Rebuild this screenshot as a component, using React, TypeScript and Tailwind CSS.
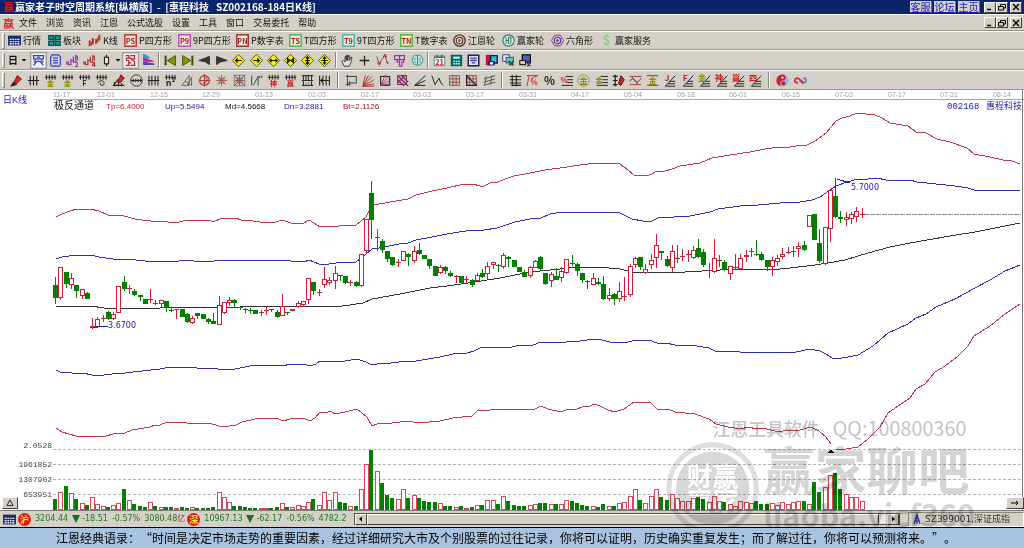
import type { ReactNode } from "react";

// ---------------------------------------------------------------- chart data

// [up, bodyTop, bodyBottom, high, low], in thirds of a chart unit below y=170
type Candle = [number, number, number, number, number];

const CANDLES: Candle[] = [
  [0, 344, 384, 321, 401], [1, 292, 383, 292, 390], [0, 306, 342, 306, 355], [1, 325, 346, 308, 357],
  [0, 346, 362, 346, 385], [1, 358, 377, 358, 386], [0, 369, 386, 365, 386], [1, 468, 475, 443, 478],
  [1, 447, 472, 442, 475], [1, 443, 447, 435, 457], [0, 425, 447, 424, 450], [1, 432, 446, 427, 451],
  [1, 348, 430, 348, 430], [0, 337, 358, 317, 362], [1, 354, 357, 344, 371], [0, 363, 375, 357, 378],
  [0, 376, 380, 375, 394], [0, 387, 401, 387, 401], [1, 387, 389, 357, 398], [0, 399, 401, 391, 404],
  [1, 391, 401, 391, 414], [0, 394, 415, 393, 425], [0, 420, 423, 411, 427], [1, 418, 421, 418, 446],
  [0, 417, 440, 417, 440], [0, 433, 456, 430, 459], [1, 444, 458, 438, 462], [0, 430, 438, 430, 446],
  [0, 433, 446, 433, 446], [0, 446, 455, 444, 462], [0, 453, 461, 430, 462], [1, 406, 466, 378, 466],
  [1, 397, 428, 397, 432], [1, 391, 400, 382, 408], [0, 391, 399, 387, 412], [0, 411, 414, 407, 419],
  [0, 417, 419, 413, 428], [0, 419, 421, 414, 432], [0, 420, 431, 420, 431], [1, 426, 429, 420, 438],
  [1, 420, 422, 408, 435], [0, 418, 420, 417, 427], [0, 425, 440, 421, 445], [1, 408, 437, 372, 437],
  [0, 426, 428, 425, 435], [1, 418, 422, 417, 424], [1, 400, 412, 392, 415], [1, 394, 404, 394, 412],
  [1, 325, 391, 325, 402], [0, 337, 363, 337, 375], [1, 366, 369, 357, 377], [1, 328, 345, 292, 355],
  [1, 331, 340, 320, 346], [1, 308, 334, 287, 358], [0, 315, 317, 315, 332], [0, 319, 338, 319, 343],
  [1, 336, 338, 330, 347], [0, 336, 347, 334, 352], [1, 253, 347, 253, 350], [1, 148, 244, 148, 248],
  [0, 68, 150, 34, 208], [1, 201, 203, 178, 243], [0, 213, 241, 208, 248], [0, 243, 266, 243, 275],
  [0, 262, 284, 262, 288], [1, 276, 278, 268, 290], [1, 244, 274, 244, 274], [0, 252, 261, 250, 287],
  [1, 244, 272, 228, 279], [0, 240, 252, 220, 254], [0, 256, 266, 256, 266], [0, 268, 288, 267, 298],
  [0, 287, 318, 287, 318], [1, 292, 310, 284, 313], [0, 291, 304, 288, 312], [0, 310, 318, 304, 320],
  [1, 318, 321, 314, 338], [0, 318, 338, 318, 338], [1, 327, 330, 318, 342], [0, 330, 345, 327, 350],
  [1, 316, 334, 308, 336], [0, 310, 320, 297, 323], [1, 288, 313, 275, 327], [1, 277, 286, 275, 298],
  [0, 285, 288, 283, 305], [1, 256, 290, 250, 296], [0, 260, 267, 259, 291], [0, 270, 290, 270, 290],
  [0, 290, 305, 290, 306], [0, 305, 320, 299, 321], [1, 290, 317, 287, 324], [1, 274, 294, 269, 295],
  [0, 261, 297, 258, 300], [0, 309, 341, 309, 346], [1, 313, 334, 306, 350], [0, 319, 329, 295, 330],
  [1, 304, 325, 292, 336], [1, 268, 308, 266, 313], [0, 278, 281, 256, 287], [0, 283, 302, 280, 318],
  [0, 308, 331, 308, 340], [0, 333, 335, 330, 357], [1, 325, 344, 308, 346], [0, 337, 341, 325, 345],
  [0, 342, 388, 318, 390], [1, 374, 387, 353, 393], [0, 373, 387, 368, 405], [1, 363, 387, 335, 396],
  [1, 377, 379, 321, 392], [1, 287, 376, 283, 381], [1, 263, 286, 261, 293], [0, 262, 291, 262, 300],
  [1, 296, 310, 281, 311], [1, 271, 284, 252, 296], [1, 226, 265, 191, 294], [0, 244, 250, 243, 269],
  [0, 267, 287, 257, 291], [1, 242, 293, 224, 307], [1, 264, 266, 224, 278], [1, 259, 262, 237, 272],
  [1, 251, 254, 240, 277], [1, 240, 263, 228, 266], [0, 235, 261, 208, 265], [0, 247, 284, 236, 291],
  [1, 300, 303, 280, 325], [1, 265, 305, 206, 309], [1, 271, 274, 254, 292], [0, 276, 300, 270, 304],
  [1, 289, 311, 287, 329], [1, 291, 293, 251, 297], [1, 265, 298, 252, 300], [1, 255, 262, 240, 275],
  [1, 242, 244, 234, 260], [0, 253, 255, 210, 258], [0, 253, 269, 246, 272], [0, 271, 291, 271, 303],
  [1, 270, 290, 261, 318], [1, 263, 277, 255, 288], [1, 251, 260, 235, 266], [1, 246, 248, 232, 252],
  [1, 244, 247, 228, 262], [1, 228, 238, 217, 260], [0, 226, 240, 214, 244], [1, 136, 170, 136, 170],
  [0, 131, 209, 131, 209], [0, 220, 273, 176, 280], [1, 172, 283, 172, 286], [1, 60, 178, 60, 217],
  [0, 77, 141, 25, 145], [0, 141, 146, 122, 160], [1, 140, 150, 125, 169], [1, 131, 148, 126, 163],
  [1, 123, 142, 111, 155], [1, 133, 135, 114, 143],
];

const VOLUMES = [
  33, 54, 71, 50, 33, 21, 16, 40, 18, 13, 10, 15, 21, 64, 30, 19, 13, 10, 24, 13,
  10, 10, 10, 6, 10, 7, 8, 5, 5, 5, 10, 54, 39, 24, 12, 12, 9, 7, 7, 5,
  7, 6, 9, 21, 10, 8, 16, 12, 24, 33, 16, 54, 30, 54, 24, 22, 12, 12, 62, 138,
  179, 116, 80, 45, 36, 32, 62, 36, 45, 36, 28, 25, 25, 21, 12, 12, 8, 12, 7, 9,
  16, 15, 30, 30, 18, 42, 27, 16, 12, 12, 16, 18, 21, 21, 18, 18, 18, 30, 27, 21,
  16, 12, 11, 9, 18, 12, 12, 21, 24, 42, 62, 30, 21, 42, 62, 39, 30, 48, 36, 28,
  28, 36, 39, 33, 23, 42, 26, 24, 18, 12, 27, 24, 21, 27, 19, 19, 21, 15, 24, 17,
  24, 26, 26, 18, 85, 54, 69, 105, 112, 64, 48, 39, 39, 26,
];

const TOP =
  "56,217 62,214 70,211 77,209 90,209 99,211 108,215 114,216 118,215 124,216 135,219 142,220 151,221 156,222 161,221 168,222 179,222 187,220 206,220 211,221 215,221 220,219 226,218 231,219 236,218 241,220 253,221 260,222 276,222 282,220 291,223 304,223 309,220 314,223 320,227 324,226 330,227 339,226 356,225 366,217 372,205 379,204 396,201 408,199 416,195 432,191 447,188 464,184 473,184 480,186 484,186 490,183 498,182 505,179 514,176 530,173 545,170 560,168 580,165 596,163 612,163 620,164 628,170 634,175 646,176 652,174 657,171 665,171 672,169 680,166 700,163 712,158 730,155 750,152 765,149 780,147 790,147 796,146 807,145 815,141 826,133 836,121 842,118 850,116 857,113 875,115 882,118 890,123 908,126 916,132 926,133 937,139 950,142 967,148 974,154 990,157 1003,160 1012,161 1020,164";
const UP =
  "56,259 62,257 69,256 75,255 91,255 99,257 113,259 136,260 153,262 179,261 187,260 194,261 214,261 222,260 242,260 274,261 282,260 291,261 304,262 309,260 314,262 319,264 329,264 336,263 356,262 366,254 372,249 379,248 399,244 408,243 416,240 432,237 447,234 472,230 484,230 497,228 515,222 530,219 541,218 550,214 562,212 572,213 578,212 590,213 612,212 620,213 632,219 643,221 652,221 658,218 690,216 710,212 718,209 740,206 758,205 780,203 800,202 812,200 820,197 830,190 836,186 847,182 858,179 868,179 877,178 886,180 910,180 917,182 936,184 955,186 968,188 974,190 1000,190 1020,191";
const MID =
  "56,307 70,306 91,306 104,308 160,308 180,307 240,307 250,306 342,306 350,305 363,303 372,299 400,294 430,288 447,286 475,282 500,278 520,274 540,271 560,269 578,267 598,267 620,269 632,272 685,272 720,270 745,269 780,269 790,268 815,265 828,263 845,260 868,253 890,247 910,243 950,236 975,232 1000,227 1020,223";
const DOWN =
  "56,370 60,372 72,373 77,374 83,373 92,375 104,375 112,374 125,373 142,371 160,369 170,367 180,367 197,368 213,368 223,370 235,369 250,366 260,365 278,365 283,366 290,364 304,364 310,366 316,364 320,361 326,362 331,361 336,362 345,361 357,359 366,362 372,365 382,363 391,363 408,361 416,361 440,357 453,354 467,353 474,351 480,348 512,347 520,345 533,345 541,342 560,343 572,341 580,341 594,339 602,340 614,343 628,342 636,340 649,340 657,343 666,343 675,345 697,346 709,348 715,351 740,352 768,352 777,353 796,352 810,349 820,351 826,354 832,358 837,359 848,357 858,355 873,346 888,333 908,324 916,318 926,314 936,307 955,299 975,288 990,280 1005,271 1020,265";
const BOTTOM =
  "56,428 62,432 76,436 91,436 98,437 106,436 113,434 125,433 132,430 150,427 155,425 160,425 167,422 184,422 187,423 212,424 223,427 236,425 242,422 255,419 277,418 283,421 290,419 303,418 310,421 315,418 320,412 325,413 331,411 335,414 345,412 357,409 367,417 372,426 377,424 392,423 408,421 418,423 440,421 453,418 472,416 478,410 490,410 500,409 506,410 528,409 533,410 541,406 548,409 561,412 568,409 577,409 582,407 590,406 594,404 600,406 608,410 615,412 624,409 634,402 650,402 657,409 668,409 675,412 695,414 709,419 716,424 728,427 742,429 747,427 758,429 763,428 775,431 783,431 800,430 811,427 819,431 826,437 831,444";
const BOTTOM_TAIL =
  "836,450 846,449 858,447 868,439 880,427 888,413 898,406 910,398 916,389 925,384 935,372 945,366 957,357 968,346 974,336 990,326 1005,314 1020,304";

const DATES = [
  "12-01", "12-15", "12-29", "01-13", "02-03", "02-17", "03-03", "03-17", "03-31",
  "04-17", "05-04", "05-18", "06-01", "06-15", "07-03", "07-17", "07-31", "08-14",
];

const SCALE = [
  { y: 449, label: "2.0528" },
  { y: 464, label: "1961852" },
  { y: 479, label: "1307902" },
  { y: 494, label: "653951" },
];

const RED = "#cc1f36";
const GREEN = "#008000";
const BLUE = "#1a1aa8";

// --------------------------------------------------------------------- icons

function P({ d, c = "#222", f = "none", w = 1.2 }: { d: string; c?: string; f?: string; w?: number }) {
  return <path d={d} stroke={c} fill={f} strokeWidth={w} />;
}

function T({ x = 8, y = 13, c = "#222", s = 10, children }: { x?: number; y?: number; c?: string; s?: number; children: string }) {
  return (
    <text x={x} y={y} fill={c} fontSize={s} fontWeight="bold" textAnchor="middle">
      {children}
    </text>
  );
}

function Svg({ children }: { children: ReactNode }) {
  return (
    <svg viewBox="0 0 16 16" className="h-[13px] w-[13px] shrink-0 overflow-visible" aria-hidden="true">
      {children}
    </svg>
  );
}

const tag = (text: string, c: string) => (
  <>
    <rect x="1" y="1" width="14" height="14" fill="#f4ecd8" stroke={c} strokeWidth="1.6" />
    <T y={12} s={9} c="#b01818">{text}</T>
  </>
);

const table = (
  <>
    <rect x="0" y="2" width="16" height="12" fill="#1c2c6c" />
    <P d="M2 6.500h12M2 9.500h12M2 12h12" c="#e8ecff" w={1.6} />
    <P d="M5 5v9M8 5v9M11 5v9" c="#1c2c6c" w={1} />
  </>
);

const comb = "M1 4h14M3 1v6M6.500 1v6M10 1v6M13.500 1v6";
const combWith = (text: string, c: string) => (
  <>
    <P d={comb} />
    <T y={15} s={9} c={c}>{text}</T>
  </>
);

const slopes = (text: string, c: string) => (
  <>
    <P d="M3 15h12M6 12h9M8 9h7M3 15 15 2" />
    <T x={5} y={9} s={10} c={c}>{text}</T>
  </>
);

const levels = (text: string, c: string) => (
  <>
    <P d="M7 3h9M9 7h7M9 10.500h7M2 14h14" />
    <T x={5} y={11} s={9} c={c}>{text}</T>
  </>
);

const diamond = (d: string) => (
  <>
    <P d="M8 .5 15.500 8 8 15.500 .5 8Z" f="#f4ee10" c="#3c3c00" w={1} />
    <P d={d} w={1.5} c="#111" />
  </>
);

const bars = (c: string, c2: string, n: string) => (
  <>
    <P d="M1 13v-3h2v3h3V6M6 8h3V3M9 4v6h3V1M12 3h2v5" c={c} w={1.5} />
    <T x={13} y={16} s={8} c={c2}>{n}</T>
  </>
);

const pressed = <rect x="-1.500" y="-1.500" width="19" height="19" fill="#f2f1ee" stroke="#8a867e" strokeWidth="1.200" />;

const grid = "M2 2h12v12H2ZM6 2v12M10 2v12M2 6h12M2 10h12";

const QUICK: { icon: ReactNode; label: string; cls: string }[] = [
  { icon: table, label: "行情", cls: "w-10" },
  {
    icon: <><P d="M1 2h6v5H1ZM9 2h6v5H9ZM1 9h6v5H1ZM9 9h6v5H9Z" c="#054a4a" f="#18a0a0" w={1.6} /><P d="M5 5l6 6" w={2} c="#073" /></>,
    label: "板块",
    cls: "w-10",
  },
  {
    icon: <><P d="M2 8v7M6 5v8M10 6v6M14 1v7" c="#d22" w={2.4} /><P d="M4 9v5M12 4v6" c="#182" w={1.6} /></>,
    label: "K线",
    cls: "w-9",
  },
  { icon: tag("PS", "#b02020"), label: "P四方形", cls: "w-[54px]" },
  { icon: tag("P9", "#c030c0"), label: "9P四方形", cls: "w-[58px]" },
  { icon: tag("PN", "#802020"), label: "P数字表", cls: "w-[53px]" },
  { icon: tag("TS", "#30b050"), label: "T四方形", cls: "w-[53px]" },
  { icon: tag("T9", "#30b0a8"), label: "9T四方形", cls: "w-[58px]" },
  { icon: tag("TN", "#40b020"), label: "T数字表", cls: "w-[53px]" },
  {
    icon: <><circle cx="8" cy="8" r="7" fill="#d8d0c0" stroke="#5a3030" strokeWidth="1.6" /><circle cx="8" cy="8" r="4" fill="none" stroke="#7a2020" strokeWidth="1.400" /><circle cx="8" cy="8" r="1.500" fill="#184" /></>,
    label: "江恩轮",
    cls: "w-[49px]",
  },
  {
    icon: <><circle cx="8" cy="8" r="7" fill="#d8e8e0" stroke="#3a7a6a" strokeWidth="1.400" /><P d="M5 4v8M8 4v8M5 8h3M11 4v6q0 2-2 2M8 4h3" c="#287868" /></>,
    label: "赢家轮",
    cls: "w-[49px]",
  },
  {
    icon: <><P d="M4.500 1.500h7L15.500 8l-4 6.500h-7L.5 8Z" c="#b02860" /><circle cx="8" cy="8" r="4" fill="#c8c8f8" stroke="#2838c0" strokeWidth="1.400" /><circle cx="8" cy="8" r="1.600" fill="#b02020" /></>,
    label: "六角形",
    cls: "w-[49px]",
  },
  { icon: <T y={14} s={16} c="#84cf84">$</T>, label: "赢家服务", cls: "w-[54px]" },
];

const NAV_A: ReactNode[] = [
  <>{pressed}<P d="M1 2h14M2 2v4h12V2M4 6v3M12 6v3M2 14l4-5h4l4 5M5 11l-3-2M11 11l3-2M6 4h4" c="#2a3ad0" w={1.400} /></>,
  <><P d="M4 1h8l2 3v9q0 2-2 2H4q-2 0-2-2V4ZM5 5h6M5 8h6M5 11h6" c="#3040c8" w={1.400} /></>,
  bars("#8c3c9c", "#7030a0", "2"),
  bars("#b03838", "#902020", "4"),
  <><P d="M8 1v3M8 12v3" w={1.500} /><rect x="5.500" y="4" width="5" height="8" fill="#e8e8e0" stroke="#222" strokeWidth="1.400" /></>,
];

const NAV_B: ReactNode[] = [
  <>{pressed}<P d="M2 2h4v3H3v3h3v6H2M8 2h5v4H9l4 4v4H8M6 5h3M5 11h4" c="#b82030" w={1.500} /></>,
  <><P d="M2 0 9 4 2 8Z" f="#30a0b0" c="#30a0b0" /><P d="M2 5 14 9H2Z" f="#c020c0" c="#c020c0" /><P d="M2 10 15 12.500 2 13Z" f="#d03030" c="#3040a0" /></>,
];

const NAV_C: ReactNode[] = [
  <><P d="M2 2v12" w={2.400} c="#3c4a00" /><P d="M14 2v12L4 8Z" f="#8a9400" c="#4a5200" /></>,
  <><P d="M14 2v12" w={2.400} c="#3c4a00" /><P d="M2 2v12L12 8Z" f="#8a9400" c="#4a5200" /></>,
  <P d="M14 3v10L9 9.500 1 8Z" f="#333" c="#333" />,
  <P d="M2 3v10l5-3.500L15 8Z" f="#333" c="#333" />,
  diamond("M12 8H4.500M7 5.500 4.500 8 7 10.500"),
  diamond("M4 8h7.500M9 5.500 11.500 8 9 10.500"),
  diamond("M3.500 8h9M5.500 6 3.500 8l2 2M10.500 6l2 2-2 2"),
  diamond("M4.500 5.500v5L7 8ZM11.500 5.500v5L9 8ZM6 8h4"),
  diamond("M8 3.500v9M6 5.500 8 3.500l2 2M6 10.500l2 2 2-2M5 8h6"),
  diamond("M8 3v10M4 8h8M6 5h4M6 11h4"),
];

const NAV_D: ReactNode[] = [
  <><P d="M4 15 1 9l2-1 2 2V3h1.500v5V1.500H8V8l1-6h1.500l-.5 6 2-4h1.500L12 11l-2 4Z" f="#e8e4dc" w={1} /></>,
  <P d="M8 2v12M2 8h12" w={1.600} />,
  <><P d="M1 3l3 9 3-5 4-5 3 9" c="#666" /><P d="M2 10l2 3 2-3M9 4l2-3 2 3M13 9l2 3" c="#d03040" w={1.800} /></>,
  <><P d="M2 2h12v5H2ZM5 7v3h3v5h3v-5h2V7M8 2v8" c="#a030a8" w={1.500} /></>,
  <><P d="M8 2q-3-2-5 1-3 3-1 6 0 4 6 5V2q3-2 5 1 3 3 1 6 0 4-6 5M4 6h2M10 6h2M4 10h2M10 10h2" c="#2a9a8e" f="#b8e0d8" /></>,
];

const NAV_E: ReactNode[] = [
  <><rect x="1.500" y="2.500" width="13" height="12" fill="#f4f4f0" stroke="#2a8a90" /><P d="M2 4h12M5 1v3M11 1v3" c="#3a6a70" w={1.600} /><T s={9} c="#c22">21</T></>,
  <><rect x="1.500" y="1.500" width="13" height="13" fill="#0c6a70" stroke="#043" /><P d="M4 4.500h8" c="#9ff" w={2.600} /><P d="M4 9h2M7 9h2M10 9h2M4 12h2M7 12h2M10 12h2" c="#cff" w={1.600} /></>,
  <><rect x="1.500" y="1.500" width="13" height="13" fill="#dde0f4" stroke="#1c1c50" strokeWidth="1.800" /><P d="M4 5h8M4 8h8M6 11h4" c="#3a40a0" w={1.600} /></>,
  <><rect x="1" y="1" width="7" height="13" fill="#c01830" /><P d="M7 2h8v9H7Z" f="#38b8c8" c="#10207a" w={1.800} /><rect x="4" y="9" width="8" height="5" fill="#18186c" /><rect x="6" y="10" width="4" height="3" fill="#e8e8f0" /></>,
  <><rect x="1" y="1" width="8" height="8" fill="#eef" stroke="#226" /><rect x="5" y="4" width="9" height="7" fill="#6cc0d0" stroke="#153a6a" /><P d="M8 9l6 5M9 14l5-5" c="#163" w={2.400} /></>,
  <><rect x="4" y="1" width="10" height="9" fill="#5060c0" stroke="#111" strokeWidth="1.600" /><P d="M1 8h7v5H1ZM10 11l4 4M14 11l-4 4" c="#222" f="#d8d8a0" w={1.400} /></>,
];

const DRAW_A: ReactNode[] = [
  <><P d="M4 12 9 2l5 4-7 7Z" f="#d82828" c="#701010" /><P d="M1 15l3-5 4 3Z" f="#333" /></>,
  <P d="M1 8h14M4 2v12M8 2v12M12 2v12" w={1.400} />,
  combWith("金", "#8a8a00"),
  combWith("金", "#8a8a00"),
  combWith("F", "#333"),
  <><P d={comb} /><P d="M3 11q5-5 8-1 1 4-3 4-3-1-1-3" /></>,
  <><P d="M7 10l4-9 4 4-5 6Z" f="#d82828" c="#701010" /><P d="M1 14h14M3 10v5M8 11v4M12 11v4M2 14l6-8" w={1.300} /></>,
  <><circle cx="8" cy="8" r="7" fill="none" stroke="#333" strokeWidth="1.200" /><P d="M1 8h14M4 6v4M7 6v4M10 6v4M13 6v4" /></>,
  <P d="M1 8h14M2.500 2v12M6 2v12M10 2v12M13.500 2v12" w={1.300} />,
  <><P d={comb} /><T y={15} s={11}>n²</T></>,
  <P d="M1 14 10 2v12ZM5 9l8 5V4M8 14l5-10" c="#555" w={1} />,
  <><circle cx="8" cy="8" r="6" fill="none" stroke="#a03030" strokeWidth="1.300" /><P d="M8 0v15M1 8h14M8 5q4-1 3 3t-5 3" c="#b83030" /></>,
  <P d="M8 1v14M1 8h14M3 3l10 10M13 3 3 13M5 5h6v6H5Z" c="#a84848" w={1} />,
  <><rect x="1.500" y="1.500" width="13" height="13" fill="none" stroke="#666" /><P d="M2 2l12 12M14 2 2 14M8 2v12M2 8h12M5 5h6v6H5Z" c="#844" w={1} /></>,
  <P d="M2 2v12M4 14 10 3v11M12 2v3M14.500 2v3" c="#444" />,
  combWith("神", "#d01818"),
  combWith("赢", "#d01818"),
  <><P d="M1 2h14M3 2v12M6 2v6M9 2v6M13 2v12M1 8h14M1 14h14M6 11h1M9 11h1" c="#333" w={1.300} /></>,
  <P d="M2 2v12M6 2v12M10 2v12M14 2v12M2 8h12M4 6l2 2-2 2" w={1.300} />,
];

const DRAW_B: ReactNode[] = [
  <P d="M3 1v14M1 3h13M5 3h9v8H3M1 13h5M6 9v6" c="#444" />,
  <P d="M1 15 4 2M1 15 8 2M1 15 12 3M1 15 15 7M1 15l14-3M1 15h14" c="#b03030" />,
  <><rect x="2" y="3" width="11" height="11" fill="none" stroke="#222" strokeWidth="1.300" /><P d="M2 14 8 1M2 14 12 3M2 14l13-7M2 14l13-2" c="#a04080" /></>,
  <><rect x="2" y="2" width="11" height="11" fill="#d8a0a8" stroke="#602030" /><P d="M2 2l13 13M2 7l8 8M7 2l8 8M2 11l9-9" c="#703060" w={1.400} /></>,
  <P d="M1 14 14 2M1 14l13-6M1 14h13" />,
  <P d="M1 2l4 11 5-8 2 6 3 3" />,
  <P d={grid} c="#803838" w={1} />,
  <><P d={grid} c="#803838" w={1} /><P d="M2 1v13h13M2 2l12 12" w={1.500} /></>,
  <P d="M1 6l14-4M1 10l14-4M1 14l14-4M4 3l-2 11M11 2 9 13" c="#555" />,
];

const DRAW_C: ReactNode[] = [
  <P d="M4 1v14M9 1v14M1 3h14M1 7h14M1 11h14M3 14h12" w={1.300} />,
  <><P d="M1 2h14M4 2l-3 13M6 6l8-4" c="#c03030" /><T x={10} y={14} s={9} c="#d02020">%</T></>,
  <T y={14} s={14}>%</T>,
  levels("%", "#d02020"),
  <><circle cx="8" cy="8" r="7" fill="none" stroke="#9a9a20" strokeWidth="1.200" /><T y={12} s={10} c="#8a8a00">金</T></>,
  levels("金", "#8a8a00"),
  <><P d="M1 3h6M4 1v14M1 8h6M1 13h6" w={1.500} /><P d="M8 12 11 2l4 5-4 7Z" f="#c82828" c="#401010" /></>,
  <><P d="M1 3h14M1 13h14" c="#c03030" /><P d="M1 9q3-6 6-1t8-3M4 4l7 9" c="#444" /></>,
  <><P d="M1 2h14M1 14h14" c="#d04040" w={1.600} /><T y={12} s={10} c="#8a8a00">金</T></>,
  slopes("J", "#c02020"),
  slopes("F", "#c02020"),
  slopes("金", "#8a8a00"),
  slopes("神", "#d01818"),
  slopes("赢", "#d01818"),
  slopes("四", "#d01818"),
];

const DRAW_D: ReactNode[] = [
  <><circle cx="8" cy="8" r="7.500" fill="#88b8ec" /><path d="M8 .5a7.500 7.500 0 0 0 0 15 3.800 3.800 0 0 1 0-7.500 3.700 3.700 0 0 0 0-7.500Z" fill="#d81828" /><circle cx="9" cy="11.500" r="2.600" fill="#d81828" /><circle cx="8" cy="4.500" r="1.400" fill="#fff" /></>,
  <><P d="M11 6q3-2 4 1 0 4-4 4-2 0-4-3" c="#5a98c8" w={2.400} /><P d="M5 11q-4 0-4-3 1-4 5-2l6 5" c="#d83040" w={2.400} /></>,
];

// ------------------------------------------------------------------- toolbar

function Tools({ icons, name, cls }: { icons: ReactNode[]; name: string; cls: string }) {
  return (
    <div role="group" aria-label={name} className={`flex shrink-0 items-center justify-between ${cls}`}>
      {icons.map((icon, i) => (
        <button key={i} aria-label={`${name} ${i + 1}`} className="flex h-4 w-4 items-center justify-center">
          <Svg>{icon}</Svg>
        </button>
      ))}
    </div>
  );
}

function Divider({ tight = false }: { tight?: boolean }) {
  return <span className={`h-4 w-0.5 shrink-0 border-r border-white bg-[#8a867e] ${tight ? "mx-0.5" : "mx-1"}`} />;
}

function Grip() {
  return <span className="mr-[3px] h-4 w-[3px] shrink-0 border border-t-white border-r-[#8a867e] border-b-[#8a867e] border-l-white" />;
}

function Caret() {
  return (
    <svg viewBox="0 0 8 8" className="h-2 w-2 shrink-0" aria-hidden="true">
      <path d="M1.500 3h5L4 5.500Z" />
    </svg>
  );
}

const ROW = "flex items-center border-t border-b border-t-white border-b-[#9a968e] pl-0.5";
const RAISED = "border border-t-white border-r-[#404040] border-b-[#404040] border-l-white bg-[#d4d0c8]";

function WindowButtons() {
  const cls = `flex h-[11px] w-3 items-center justify-center ${RAISED}`;
  return (
    <div className="flex">
      <button aria-label="最小化" className={cls}>
        <svg viewBox="0 0 8 8" className="h-2 w-2"><path d="M1 6.500h4" stroke="#000" strokeWidth="1.500" /></svg>
      </button>
      <button aria-label="还原" className={cls}>
        <svg viewBox="0 0 8 8" className="h-2 w-2">
          <path d="M2.500 1.500h5v3.500h-2M2.500 1.500v1.500M.5 3.500h5V7h-5Z" fill="none" stroke="#000" />
        </svg>
      </button>
      <button aria-label="关闭" className={`ml-0.5 ${cls}`}>
        <svg viewBox="0 0 8 8" className="h-2 w-2"><path d="M1 1l6 6M7 1 1 7" stroke="#000" strokeWidth="1.400" /></svg>
      </button>
    </div>
  );
}

const MENU = ["文件", "浏览", "资讯", "江恩", "公式选股", "设置", "工具", "窗口", "交易委托", "帮助"];

// --------------------------------------------------------------------- chart

function Line({ points, color }: { points: string; color: string }) {
  return <polyline points={points} fill="none" stroke={color} strokeWidth="1" />;
}

function CandleMark({ candle, x }: { candle: Candle; x: number }) {
  const [up, ...rest] = candle;
  const [top, bottom, high, low] = rest.map((v) => Math.round(170 + v / 3));
  const color = up ? RED : GREEN;
  const height = Math.max(bottom - top, 1);
  return (
    <g fill={color}>
      <rect x={x} y={high} width="1" height={Math.max(low - high, 1)} />
      <rect x={x - 2} y={top} width="5" height={height} />
      {up === 1 && height > 2 && <rect x={x - 1} y={top + 1} width="3" height={height - 2} fill="#fff" />}
    </g>
  );
}

function VolumeBar({ value, up, x }: { value: number; up: boolean; x: number }) {
  const h = Math.round(value / 3);
  return (
    <g>
      <rect x={x - 2} y={510 - h} width={up ? 5 : 4} height={h} fill={up ? "#d24a5a" : GREEN} />
      {up && h > 2 && <rect x={x - 1} y={511 - h} width="3" height={h - 2} fill="#fff" />}
    </g>
  );
}

function Chart() {
  const colX = (i: number) => Math.round(55.2 + i * 5.27);
  return (
    <svg viewBox="0 90 1024 421" className="block w-full bg-white" role="img" aria-label="日K线">
      <g fontFamily="'Liberation Sans', sans-serif" fontSize="7" fill="#a0a0a0">
        <text x="53" y="97">11-17</text>
        {DATES.map((d, i) => (
          <text key={d} x={97 + Math.round(i * 52.7)} y="97">{d}</text>
        ))}
      </g>
      <path d="M53 99.500h971" stroke="#a8a8a8" />

      <g shapeRendering="crispEdges">
        {SCALE.map((s) => (
          <path key={s.y} d={`M53 ${s.y}.5H1022`} stroke="#b4b4b4" strokeDasharray="3 2" />
        ))}
        <path d="M864 214.500H1021" stroke="#8c8c8c" strokeDasharray="5 1" />
        <Line points={TOP} color="#c4384a" />
        <Line points={UP} color="#3030b4" />
        <Line points={MID} color="#333" />
        <Line points={DOWN} color="#3030b4" />
        <Line points={BOTTOM} color="#c4384a" />
        <Line points={BOTTOM_TAIL} color="#c4384a" />
        {CANDLES.map((c, i) => (
          <CandleMark key={i} candle={c} x={colX(i)} />
        ))}
        {VOLUMES.map((v, i) => (
          <VolumeBar key={i} value={v} up={CANDLES[i][0] === 1} x={colX(i)} />
        ))}
        <path d="M93 328 102 326h6M837 179l13 4" fill="none" stroke={BLUE} />
        <path d="M827 453h7l-3-3Z" fill="#000" />
        <path d="M0 510.500h1024" stroke="#7c7c7c" />
        <path d="M1022.500 90v421" stroke="#7c7c7c" />
      </g>

      <g fontFamily="'Liberation Mono', monospace" fontSize="8" fill="#444" textAnchor="end">
        {SCALE.map((s, i) => (
          <text key={s.y} x="52" y={i === 0 ? s.y - 1 : s.y + 3}>{s.label}</text>
        ))}
      </g>
      <g fontFamily="'DejaVu Sans', sans-serif" fontSize="8" fill={BLUE}>
        <text x="108" y="328">3.6700</text>
        <text x="851" y="190">5.7000</text>
      </g>

      <g fontFamily="'Liberation Sans', 'Noto Sans CJK SC', sans-serif" fontSize="8">
        <text x="3" y="103" fill={BLUE} fontSize="9">日K线</text>
        <text x="54" y="109" fill="#111" fontSize="10">极反通道</text>
        <g>
          <text x="106" y="109" fill="#d01c2c">Tp=6.4000</text>
          <text x="165" y="109" fill={BLUE}>Up=5.5494</text>
          <text x="225" y="109" fill="#111">Md=4.5668</text>
          <text x="284" y="109" fill={BLUE}>Dn=3.2881</text>
          <text x="343" y="109" fill="#a01020">Bt=2.1126</text>
        </g>
      </g>
      <g fontFamily="'Liberation Mono', 'Noto Sans CJK SC', monospace" fontSize="9" fill={BLUE}>
        <text x="947" y="109">002168</text>
        <text x="1022" y="109" fontSize="9" textAnchor="end">惠程科技</text>
      </g>
    </svg>
  );
}

// Translucent brand mark that lies over the volume pane and the status bar.
function Watermark() {
  return (
    <svg
      viewBox="0 0 320 110"
      className="pointer-events-none absolute right-[4%] bottom-0 w-[31%] mix-blend-multiply"
      fontFamily="'Noto Sans CJK SC', sans-serif"
      aria-hidden="true"
    >
      <text x="47" y="17" fontSize="18" fontWeight="500" fill="#c4c4c4">江恩工具软件</text>
      <text x="168" y="17" fontSize="20" fill="#c4c4c4">QQ:100800360</text>
      <circle cx="47" cy="70" r="44" fill="none" stroke="#dedede" strokeWidth="5" />
      <circle cx="47" cy="70" r="37" fill="#d8d8d8" />
      <g fontSize="26" fontWeight="bold" fill="#fff">
        <text x="21" y="68">财赢</text>
        <text x="21" y="93">富家</text>
      </g>
      <text x="98" y="72" fontSize="52" fontWeight="bold" fill="#d4d4d4">赢家聊吧</text>
      <text x="98" y="109" fontSize="31" fontWeight="bold" fill="#d4d4d4">liaoba.yjcf360</text>
    </svg>
  );
}

// ---------------------------------------------------------------- status bar

function Market({ name, values, amount }: { name: string; values: string[]; amount: ReactNode }) {
  const [last, change, percent] = values;
  return (
    <div className="flex items-center gap-1 whitespace-nowrap">
      <span className="flex h-[13px] w-[13px] items-center justify-center rounded-full bg-[#dc1c10] font-['Noto_Sans_CJK_SC',sans-serif] text-[9px] leading-[9px] font-bold text-[#ffe838]">
        {name}
      </span>
      <span>{last}</span>
      <span className="flex items-center">
        <svg viewBox="0 0 8 8" className="mr-0.5 h-2 w-2" aria-hidden="true"><path d="M0 0h8L4 8Z" fill="#187018" /></svg>
        {change}
      </span>
      <span>{percent}</span>
      <span>{amount}</span>
    </div>
  );
}

function StatusBar() {
  const arrow = `flex h-[11px] w-3 shrink-0 items-center justify-center ${RAISED}`;
  return (
    <footer className="flex h-[17px] items-center border-b border-black bg-[#d4d0c8] pl-[3px] font-['DejaVu_Sans','Noto_Sans_CJK_SC',sans-serif] text-[8px] leading-[10px] text-[#1e7a1e]">
      <div className="flex w-[349px] shrink-0 items-center gap-0.5">
        <Svg>{table}</Svg>
        <Market name="沪" values={["3204.44", "-18.51", "-0.57%"]} amount={<>3080.48<span className="text-[#a03030]">亿</span></>} />
        <Market name="深" values={["10967.13", "-62.17", "-0.56%"]} amount="4782.2" />
      </div>
      <div className="ml-0.5 flex h-3 min-w-0 flex-1 items-center border border-[#55524c] bg-[#e8e5de]">
        <button aria-label="向左" className={arrow}>
          <svg viewBox="0 0 8 8" className="h-2 w-2"><path d="M5 1.500v5L2 4Z" /></svg>
        </button>
        <span className={`mr-2 h-[11px] flex-1 ${RAISED}`} />
        <button aria-label="向右" className={arrow}>
          <svg viewBox="0 0 8 8" className="h-2 w-2"><path d="M3 1.500v5L6 4Z" /></svg>
        </button>
      </div>
      <div className="ml-2 flex h-[15px] w-[116px] shrink-0 items-center gap-1 border border-t-[#8a867e] border-r-white border-b-white border-l-[#8a867e] pl-1 text-[9px] whitespace-nowrap text-[#333]">
        <svg viewBox="0 0 8 12" className="h-3 w-2" aria-hidden="true">
          <path d="M1 11 4 1l3 10M2 8h4M4 1v10" fill="none" stroke="#2830a0" strokeWidth="1.200" />
        </svg>
        <span>SZ399001,深证成指</span>
      </div>
    </footer>
  );
}

// ----------------------------------------------------------------------- app

export default function App() {
  return (
    <div lang="zh-CN" className="w-full overflow-hidden bg-[#d4d0c8] font-['Noto_Sans_CJK_SC',sans-serif] text-[9px] leading-[12px] text-[#111]">
      <header className="flex h-[14px] items-center bg-[#0a246a] pr-0.5 pl-[3px] text-white">
        <span className="flex w-3 items-center justify-center text-[10px] font-bold text-[#e01c24]">赢</span>
        <h1 className="flex-1 text-[10px] font-bold whitespace-pre">赢家老子时空周期系统[纵横版]  -  [惠程科技   SZ002168-184日K线]</h1>
        <nav className="mr-1 flex gap-0.5 text-[10px] text-[#1818d0]">
          {["客服", "论坛", "主页"].map((t) => (
            <a key={t} href="#" className="flex h-3 w-[22px] items-center justify-center border-r border-b border-[#707070] bg-[#d4d0c8] whitespace-nowrap underline">
              {t}
            </a>
          ))}
        </nav>
        <WindowButtons />
      </header>

      <div className="flex h-[17px] items-center border-t border-b border-t-white border-b-[#9a968e] pr-0.5 pl-[3px]">
        <span className="w-4 text-[11px] font-bold text-[#d8202c]">赢</span>
        <nav className="flex flex-1 gap-[9px]">
          {MENU.map((m) => (
            <button key={m}>{m}</button>
          ))}
        </nav>
        <WindowButtons />
      </div>

      <div className={`h-[19px] ${ROW}`}>
        <Grip />
        {QUICK.map((q) => (
          <button key={q.label} className={`flex shrink-0 items-center gap-0.5 whitespace-nowrap ${q.cls}`}>
            <Svg>{q.icon}</Svg>
            {q.label}
          </button>
        ))}
      </div>

      <div className={`h-5 ${ROW}`}>
        <Grip />
        <button className="flex w-[22px] items-center gap-0.5 text-[10px] font-bold">
          日<Caret />
        </button>
        <Tools icons={NAV_A} name="周期" cls="w-[84px]" />
        <Caret />
        <Tools icons={NAV_B} name="指标" cls="w-[34px]" />
        <Divider tight />
        <Tools icons={NAV_C} name="移动" cls="w-[171px]" />
        <Divider tight />
        <Tools icons={NAV_D} name="光标" cls="w-[86px]" />
        <Divider tight />
        <Tools icons={NAV_E} name="窗格" cls="w-[103px]" />
      </div>

      <div className={`h-5 ${ROW}`}>
        <Grip />
        <Tools icons={DRAW_A} name="画线" cls="w-[325px]" />
        <Divider />
        <Tools icons={DRAW_B} name="扇形" cls="w-[154px]" />
        <Divider />
        <Tools icons={DRAW_C} name="分割" cls="w-[257px]" />
        <Divider />
        <Tools icons={DRAW_D} name="太极" cls="w-[34px]" />
      </div>

      <main className="relative overflow-hidden">
        <div className="relative">
          <Chart />
          <button aria-label="展开" className={`absolute bottom-0.5 left-0.5 flex h-3 w-4 items-center justify-center ${RAISED}`}>
            <svg viewBox="0 0 8 8" className="h-2 w-2"><path d="M4 1 7 6.500H1Z" fill="none" stroke="#000" strokeWidth=".8" /></svg>
          </button>
          <button aria-label="右移" className={`absolute right-0 bottom-0.5 flex h-3 w-[18px] items-center justify-center ${RAISED}`}>
            <svg viewBox="0 0 8 8" className="h-2 w-2"><path d="M0 4h7M5 2l2 2-2 2" fill="none" stroke="#000" /></svg>
          </button>
        </div>
        <StatusBar />
        <Watermark />
      </main>

      <p className="h-5 bg-[#a8c3df] px-14 text-[12px] leading-[20px] whitespace-nowrap text-black [text-spacing-trim:space-all]">
        江恩经典语录：“时间是决定市场走势的重要因素，经过详细研究大市及个别股票的过往记录，你将可以证明，历史确实重复发生；而了解过往，你将可以预测将来。”。
      </p>
    </div>
  );
}
